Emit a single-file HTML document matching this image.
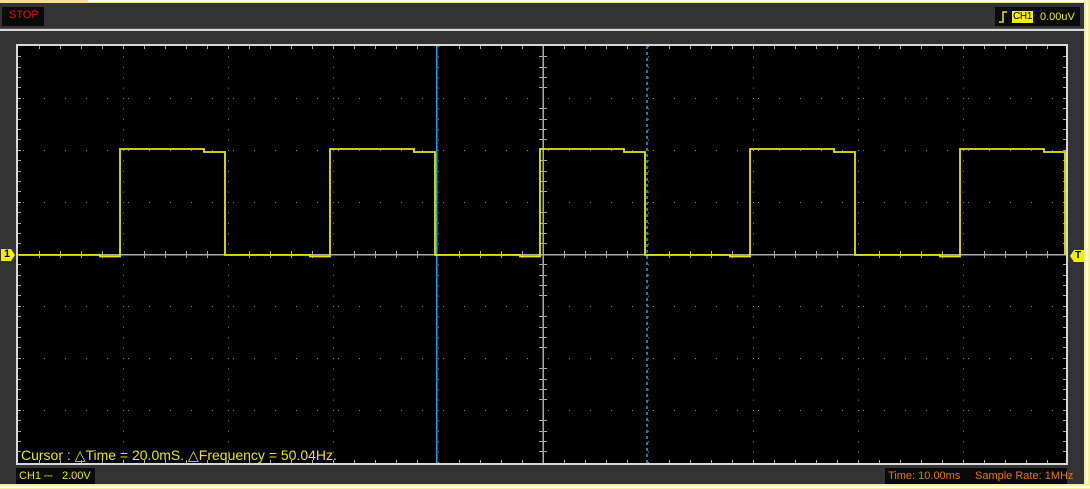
<!DOCTYPE html>
<html><head><meta charset="utf-8"><style>
html,body{margin:0;padding:0;background:#333;}
body{width:1090px;height:489px;overflow:hidden;position:relative;font-family:"Liberation Sans",sans-serif;}
.t{position:absolute;white-space:nowrap;}
</style></head><body>
<svg width="1090" height="489" style="position:absolute;left:0;top:0">
<rect x="0" y="0" width="1090" height="489" fill="#333"/>
<rect x="0" y="0" width="1090" height="3" fill="#f5e08a"/>
<rect x="88" y="0" width="1000" height="2" fill="#fbfbf0"/>
<rect x="1084" y="0" width="6" height="489" fill="#f5f0a0"/>
<rect x="1086" y="0" width="2" height="489" fill="#fffde0"/>
<rect x="0" y="484" width="1090" height="5" fill="#f5f0a0"/>
<rect x="0" y="486" width="1090" height="2" fill="#fffde0"/>
<rect x="0" y="29" width="1084" height="2" fill="#d8d8d8"/>
<rect x="0" y="28" width="1084" height="1" fill="#555"/>
<rect x="2" y="7" width="42" height="19" fill="#0a0a0a"/>
<rect x="995" y="7" width="85" height="19" fill="#0a0a0a"/>
<rect x="1012" y="11" width="21" height="12" fill="#f0f000"/>
<path d="M999 22 H1003 V12 H1007" stroke="#e8e800" stroke-width="1.5" fill="none"/>
<rect x="16" y="44" width="1052" height="421" fill="#d8d8d8"/>
<rect x="18" y="46" width="1048" height="417" fill="#000"/>
<g stroke="#888" stroke-width="1" stroke-dasharray="1 9.4" fill="none">
<path d="M123.5 46V463M228.5 46V463M333.5 46V463M438.5 46V463M648.5 46V463M753.5 46V463M858.5 46V463M963.5 46V463"/>
</g>
<g stroke="#888" stroke-width="1" stroke-dasharray="1 20" fill="none">
<path d="M18 98.5H1066M18 150.5H1066M18 202.5H1066M18 306.5H1066M18 358.5H1066M18 410.5H1066" stroke-dashoffset="-5"/>
</g>
<rect x="18" y="254" width="1048" height="1.5" fill="#aaa"/>
<rect x="542.5" y="46" width="1.5" height="417" fill="#aaa"/>
<g stroke="#aaa" stroke-width="1">
<path d="M39.5 251V258M60.5 251V258M81.5 251V258M102.5 251V258M144.5 251V258M165.5 251V258M186.5 251V258M207.5 251V258M249.5 251V258M270.5 251V258M291.5 251V258M312.5 251V258M354.5 251V258M375.5 251V258M396.5 251V258M417.5 251V258M459.5 251V258M480.5 251V258M501.5 251V258M522.5 251V258M564.5 251V258M585.5 251V258M606.5 251V258M627.5 251V258M669.5 251V258M690.5 251V258M711.5 251V258M732.5 251V258M774.5 251V258M795.5 251V258M816.5 251V258M837.5 251V258M879.5 251V258M900.5 251V258M921.5 251V258M942.5 251V258M984.5 251V258M1005.5 251V258M1026.5 251V258M1047.5 251V258"/>
<path d="M539 56.5H547M539 67.5H547M539 77.5H547M539 87.5H547M539 108.5H547M539 119.5H547M539 129.5H547M539 139.5H547M539 160.5H547M539 171.5H547M539 181.5H547M539 191.5H547M539 212.5H547M539 223.5H547M539 233.5H547M539 243.5H547M539 264.5H547M539 275.5H547M539 285.5H547M539 295.5H547M539 316.5H547M539 327.5H547M539 337.5H547M539 347.5H547M539 368.5H547M539 379.5H547M539 389.5H547M539 399.5H547M539 420.5H547M539 431.5H547M539 441.5H547M539 451.5H547"/>
<path d="M39.5 46V49M60.5 46V49M81.5 46V49M102.5 46V49M123.5 46V49M144.5 46V49M165.5 46V49M186.5 46V49M207.5 46V49M228.5 46V49M249.5 46V49M270.5 46V49M291.5 46V49M312.5 46V49M333.5 46V49M354.5 46V49M375.5 46V49M396.5 46V49M417.5 46V49M459.5 46V49M480.5 46V49M501.5 46V49M522.5 46V49M564.5 46V49M585.5 46V49M606.5 46V49M627.5 46V49M669.5 46V49M690.5 46V49M711.5 46V49M732.5 46V49M753.5 46V49M774.5 46V49M795.5 46V49M816.5 46V49M837.5 46V49M858.5 46V49M879.5 46V49M900.5 46V49M921.5 46V49M942.5 46V49M963.5 46V49M984.5 46V49M1005.5 46V49M1026.5 46V49M1047.5 46V49"/>
<path d="M39.5 460V463M60.5 460V463M81.5 460V463M102.5 460V463M123.5 460V463M144.5 460V463M165.5 460V463M186.5 460V463M207.5 460V463M228.5 460V463M249.5 460V463M270.5 460V463M291.5 460V463M312.5 460V463M333.5 460V463M354.5 460V463M375.5 460V463M396.5 460V463M417.5 460V463M459.5 460V463M480.5 460V463M501.5 460V463M522.5 460V463M564.5 460V463M585.5 460V463M606.5 460V463M627.5 460V463M669.5 460V463M690.5 460V463M711.5 460V463M732.5 460V463M753.5 460V463M774.5 460V463M795.5 460V463M816.5 460V463M837.5 460V463M858.5 460V463M879.5 460V463M900.5 460V463M921.5 460V463M942.5 460V463M963.5 460V463M984.5 460V463M1005.5 460V463M1026.5 460V463M1047.5 460V463"/>
<path d="M18 56.5H21M18 67.5H21M18 77.5H21M18 87.5H21M18 98.5H21M18 108.5H21M18 119.5H21M18 129.5H21M18 139.5H21M18 150.5H21M18 160.5H21M18 171.5H21M18 181.5H21M18 191.5H21M18 202.5H21M18 212.5H21M18 223.5H21M18 233.5H21M18 243.5H21M18 264.5H21M18 275.5H21M18 285.5H21M18 295.5H21M18 306.5H21M18 316.5H21M18 327.5H21M18 337.5H21M18 347.5H21M18 358.5H21M18 368.5H21M18 379.5H21M18 389.5H21M18 399.5H21M18 410.5H21M18 420.5H21M18 431.5H21M18 441.5H21M18 451.5H21"/>
<path d="M1063 56.5H1066M1063 67.5H1066M1063 77.5H1066M1063 87.5H1066M1063 98.5H1066M1063 108.5H1066M1063 119.5H1066M1063 129.5H1066M1063 139.5H1066M1063 150.5H1066M1063 160.5H1066M1063 171.5H1066M1063 181.5H1066M1063 191.5H1066M1063 202.5H1066M1063 212.5H1066M1063 223.5H1066M1063 233.5H1066M1063 243.5H1066M1063 264.5H1066M1063 275.5H1066M1063 285.5H1066M1063 295.5H1066M1063 306.5H1066M1063 316.5H1066M1063 327.5H1066M1063 337.5H1066M1063 347.5H1066M1063 358.5H1066M1063 368.5H1066M1063 379.5H1066M1063 389.5H1066M1063 399.5H1066M1063 410.5H1066M1063 420.5H1066M1063 431.5H1066M1063 441.5H1066M1063 451.5H1066"/>
</g>
<rect x="436" y="46" width="1.5" height="417" fill="#1aa8e0"/>
<path d="M647 46V463" stroke="#1aa8e0" stroke-width="1.5" stroke-dasharray="3 3"/>
<path d="M19 255 H100 V256.5 H120 V149 H204 V152 H225 V255 H310 V256.5 H330 V149 H414 V152 H435 V255 H520 V256.5 H540 V149 H624 V152 H645 V255 H730 V256.5 H750 V149 H834 V152 H855 V255 H940 V256.5 H960 V149 H1044 V152 H1065 V255" stroke="#e6e600" stroke-width="1.8" fill="none"/>
<path d="M1 249H11L15 255L11 261H1Z" fill="#f0f000"/>
<path d="M1084 250H1074L1070 256L1074 262H1084Z" fill="#f0f000"/>
<rect x="16" y="468" width="79" height="16" fill="#0a0a0a"/>
<rect x="885" y="468" width="182" height="16" fill="#0a0a0a"/>
</svg>
<div class="t" style="left:9px;top:9px;font-size:11px;color:#e01010;">STOP</div>
<div class="t" style="left:1013px;top:11px;font-size:10px;letter-spacing:-0.3px;color:#000;">CH1</div>
<div class="t" style="left:1040px;top:11px;font-size:11px;color:#e8e800;">0.00uV</div>
<div class="t" style="left:4px;top:248px;font-size:11px;font-weight:bold;color:#000;">1</div>
<div class="t" style="left:1075px;top:250px;font-size:10px;font-weight:bold;color:#000;">T</div>
<div class="t" style="left:21px;top:447px;font-size:14px;color:#e6e600;">Cursor : △Time = 20.0mS. △Frequency = 50.04Hz.</div>
<div class="t" style="left:19px;top:470px;font-size:11px;color:#e6e600;">CH1 ⎓&nbsp;&nbsp; 2.00V</div>
<div class="t" style="left:888px;top:470px;font-size:11px;color:#e07800;">Time: 10.00ms</div>
<div class="t" style="left:975px;top:470px;font-size:11px;color:#e07800;">Sample Rate: 1MHz</div>
</body></html>
